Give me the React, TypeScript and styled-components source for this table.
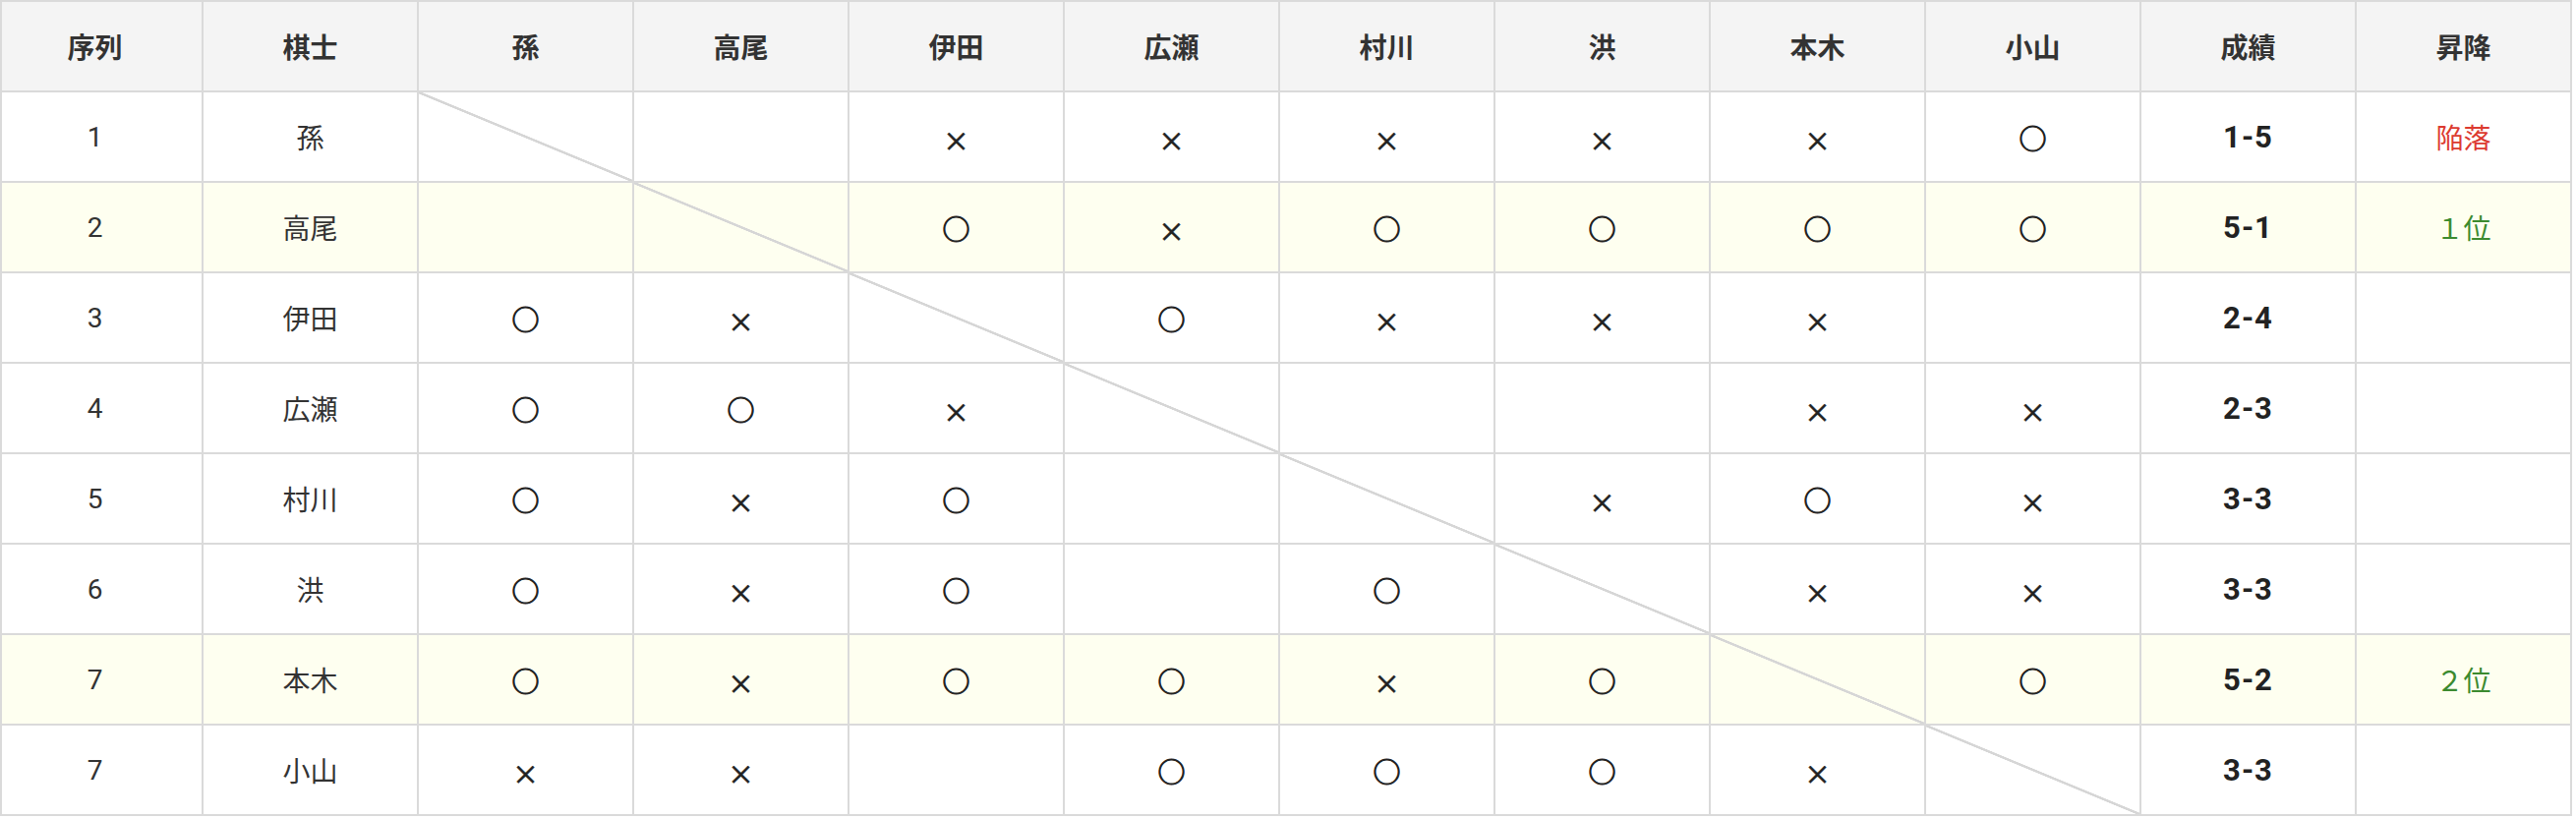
import React from "react";
import styled, { createGlobalStyle, css } from "styled-components";

type Mark = "o" | "x" | "";

interface Player {
  seq: number;
  name: string;
  marks: Mark[];
  score: string;
  result?: { label: string; tone: "down" | "up" };
  highlight?: boolean;
}

const players: Player[] = [
  { seq: 1, name: "孫", marks: ["", "", "x", "x", "x", "x", "x", "o"], score: "1-5", result: { label: "陥落", tone: "down" } },
  { seq: 2, name: "高尾", marks: ["", "", "o", "x", "o", "o", "o", "o"], score: "5-1", result: { label: "１位", tone: "up" }, highlight: true },
  { seq: 3, name: "伊田", marks: ["o", "x", "", "o", "x", "x", "x", ""], score: "2-4" },
  { seq: 4, name: "広瀬", marks: ["o", "o", "x", "", "", "", "x", "x"], score: "2-3" },
  { seq: 5, name: "村川", marks: ["o", "x", "o", "", "", "x", "o", "x"], score: "3-3" },
  { seq: 6, name: "洪", marks: ["o", "x", "o", "", "o", "", "x", "x"], score: "3-3" },
  { seq: 7, name: "本木", marks: ["o", "x", "o", "o", "x", "o", "", "o"], score: "5-2", result: { label: "２位", tone: "up" }, highlight: true },
  { seq: 7, name: "小山", marks: ["x", "x", "", "o", "o", "o", "x", ""], score: "3-3" },
];

const opponents = ["孫", "高尾", "伊田", "広瀬", "村川", "洪", "本木", "小山"];

const GlobalStyle = createGlobalStyle`
  body {
    margin: 0;
    background: #fff;
    font-family: Roboto, "Noto Sans CJK JP", "Noto Sans", sans-serif;
    color: #333;
  }
`;

const Table = styled.table`
  width: 2616px;
  table-layout: fixed;
  border-collapse: collapse;
  font-size: 28px;
  text-align: center;

  th:first-child,
  td:first-child {
    padding-right: 14px;
  }
`;

const HeadRow = styled.tr`
  height: 92px;
  background: #f4f4f4;
`;

const HeadCell = styled.th`
  border: 2px solid #dadada;
  font-weight: 700;
  color: #333;
  vertical-align: middle;
  padding: 0;
`;

const Row = styled.tr<{ $highlight?: boolean }>`
  height: 92px;
  background: ${(p) => (p.$highlight ? "#fefff0" : "#fff")};
`;

const Cell = styled.td<{ $diag?: boolean }>`
  border: 2px solid #dadada;
  padding: 0;
  vertical-align: middle;
  color: #333;
  ${(p) =>
    p.$diag &&
    css`
      background-image: linear-gradient(
        to top right,
        transparent calc(50% - 1.5px),
        #d6d6d6 calc(50% - 1px),
        #d6d6d6 calc(50% + 1px),
        transparent calc(50% + 1.5px)
      );
    `}
`;

const MarkGlyph = styled.span<{ $kind: Mark }>`
  display: inline-block;
  font-family: "Noto Sans CJK JP", sans-serif;
  color: #222;
  position: relative;
  ${(p) =>
    p.$kind === "o"
      ? css`
          font-size: 28px;
          -webkit-text-stroke: 1px #222;
          top: 1px;
        `
      : css`
          font-size: 27px;
          font-weight: 500;
          -webkit-text-stroke: 0.4px #222;
          top: 3px;
        `}
`;

const Score = styled.span`
  font-size: 31px;
  font-weight: 700;
  letter-spacing: 1px;
  color: #222;
`;

const Result = styled.span<{ $tone: "down" | "up" }>`
  color: ${(p) => (p.$tone === "down" ? "#dc3a30" : "#3b8a2f")};
`;

export default function App() {
  return (
    <>
      <GlobalStyle />
      <Table>
        <colgroup>
          <col style={{ width: 205 }} />
          {Array.from({ length: 11 }).map((_, i) => (
            <col key={i} />
          ))}
        </colgroup>
        <thead>
          <HeadRow>
            <HeadCell>序列</HeadCell>
            <HeadCell>棋士</HeadCell>
            {opponents.map((o) => (
              <HeadCell key={o}>{o}</HeadCell>
            ))}
            <HeadCell>成績</HeadCell>
            <HeadCell>昇降</HeadCell>
          </HeadRow>
        </thead>
        <tbody>
          {players.map((pl, r) => (
            <Row key={pl.name} $highlight={pl.highlight}>
              <Cell>{pl.seq}</Cell>
              <Cell>{pl.name}</Cell>
              {pl.marks.map((m, c) => (
                <Cell key={c} $diag={c === r}>
                  {m && <MarkGlyph $kind={m}>{m === "o" ? "○" : "×"}</MarkGlyph>}
                </Cell>
              ))}
              <Cell>
                <Score>{pl.score}</Score>
              </Cell>
              <Cell>
                {pl.result && <Result $tone={pl.result.tone}>{pl.result.label}</Result>}
              </Cell>
            </Row>
          ))}
        </tbody>
      </Table>
    </>
  );
}
